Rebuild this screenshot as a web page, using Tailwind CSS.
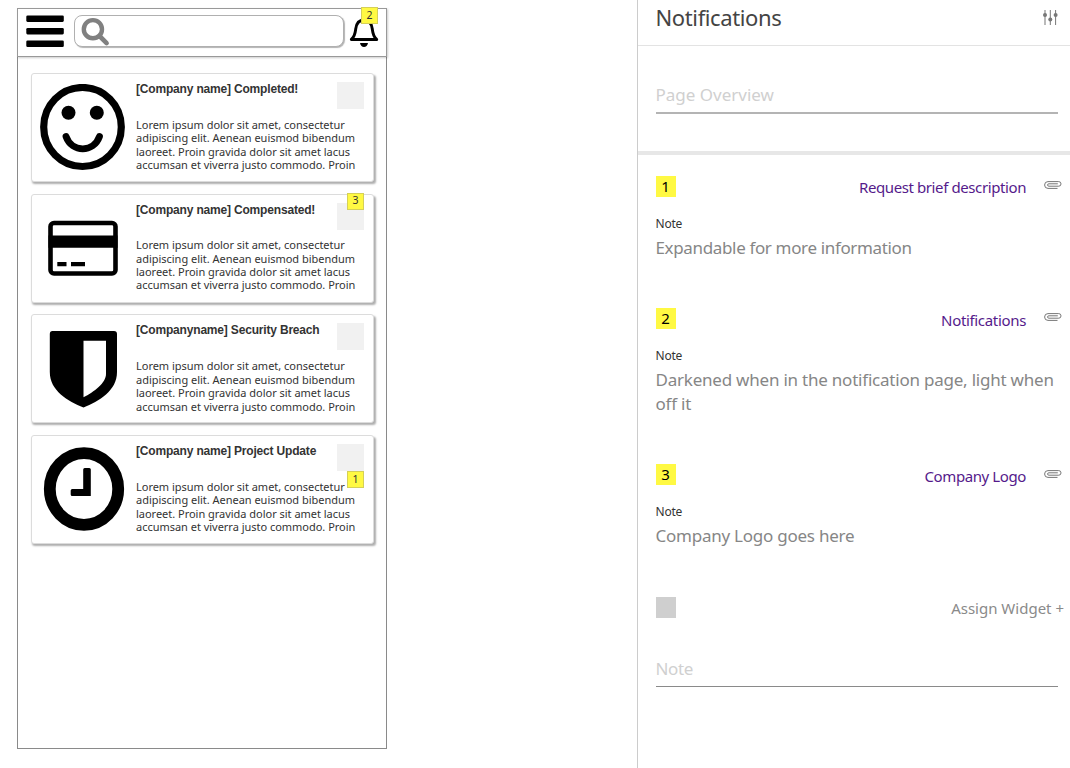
<!DOCTYPE html>
<html lang="en">
<head>
<meta charset="utf-8">
<title>Notifications</title>
<script src="https://cdn.jsdelivr.net/npm/@tailwindcss/browser@4"></script>
</head>
<body class="flex h-[768px] w-[1070px] overflow-hidden bg-white font-['Noto_Sans',sans-serif]">

<!-- Wireframe canvas -->
<main class="w-[637px] shrink-0 pl-[17px] pt-2">
  <div class="h-[741px] w-[370px] border border-[#8a8a8a]">
    <header class="relative -ml-px -mt-px flex h-[49px] w-[370px] border border-[#999] bg-white shadow-[1px_1px_2px_rgba(0,0,0,0.2)]">
      <svg class="ml-2 mt-[6px] h-[33px] w-[39px]" viewBox="0 0 39 33"><rect x=".3" y=".5" width="37.5" height="6.4" rx="1.3"/><rect x=".3" y="13" width="37.5" height="6.4" rx="1.3"/><rect x=".3" y="25.5" width="37.5" height="6.5" rx="1.3"/></svg>
      <div class="ml-[9px] mt-[6px] h-8 w-[270px] rounded-lg border border-[#b0b0b0] bg-white pl-[6px] shadow-[1px_1px_1px_rgba(0,0,0,0.3)]">
        <svg class="mt-px h-[30px] w-[30px]" viewBox="0 0 30 30" fill="none" stroke="#808080"><circle cx="11.9" cy="12.2" r="9.1" stroke-width="4.4"/><path d="M19 19.5l6.600 6.600" stroke-width="4.600" stroke-linecap="round"/></svg>
      </div>
      <svg class="ml-[5px] mt-[7px] h-[32px] w-[30px]" viewBox="0 0 30 32"><path d="M2.3 23.500C6 20.500 6.200 17 6.700 13C7.400 7 9.800 4 15 4s7.600 3 8.300 9c.5 4 .7 7.500 4.400 10.500z" fill="none" stroke="#000" stroke-width="2.900" stroke-linejoin="round"/><path d="M15 1v4" stroke="#000" stroke-width="3"/><path d="M11 27h8c-.5 2.600-2 4-4 4s-3.500-1.400-4-4z"/></svg>
      <span class="absolute left-[343px] top-[-2px] flex h-[17px] w-[17px] items-center justify-center border border-[#d5d058] bg-[#fff943] text-[10.5px] text-[#333]">2</span>
    </header>

    <div class="flex flex-col gap-[11.700px] pl-[13px] pt-4">
      <article class="relative flex h-[109px] w-[343px] rounded-[3px] border border-[#dcdcdc] bg-white shadow-[1.500px_2px_2px_rgba(0,0,0,0.32)]">
        <svg class="ml-2 mt-[10px] h-[87px] w-[86px] shrink-0" viewBox="0 0 86 87"><ellipse cx="42.500" cy="43" rx="38.800" ry="39.500" fill="none" stroke="#000" stroke-width="7.200"/><circle cx="28.500" cy="28.800" r="7"/><circle cx="56.800" cy="28.800" r="7"/><path d="M26 52.500c6 16.500 27.500 16.500 33.500 0" fill="none" stroke="#000" stroke-width="6.800" stroke-linecap="round"/></svg>
        <div class="ml-[10px] mt-[7px] whitespace-nowrap">
          <h2 class="font-['Liberation_Sans',sans-serif] text-xs font-bold leading-4 tracking-[-0.18px] text-[#333]">[Company name] Completed!</h2>
          <p class="mt-[21px] text-[11px] leading-[13.400px] tracking-[-0.02px] text-[#333]">Lorem ipsum dolor sit amet, consectetur<br>adipiscing elit. Aenean euismod bibendum<br>laoreet. Proin gravida dolor sit amet lacus<br>accumsan et viverra justo commodo. Proin</p>
        </div>
        <div class="absolute right-[9px] top-2 h-[27px] w-[27px] bg-[#f1f1f1]"></div>
      </article>

      <article class="relative flex h-[109px] w-[343px] rounded-[3px] border border-[#dcdcdc] bg-white shadow-[1.500px_2px_2px_rgba(0,0,0,0.32)]">
        <svg class="ml-2 mt-[10px] h-[87px] w-[86px] shrink-0" viewBox="0 0 86 87"><rect x="10.500" y="18" width="65" height="50.500" rx="3.500" fill="none" stroke="#000" stroke-width="4.600"/><path d="M8.500 30.500h69v12.300h-69zM17.300 57h9.200v4.300h-9.200zM31 57h14v4.300H31z"/></svg>
        <div class="ml-[10px] mt-[7px] whitespace-nowrap">
          <h2 class="font-['Liberation_Sans',sans-serif] text-xs font-bold leading-4 tracking-[-0.18px] text-[#333]">[Company name] Compensated!</h2>
          <p class="mt-[20.500px] text-[11px] leading-[13.400px] tracking-[-0.02px] text-[#333]">Lorem ipsum dolor sit amet, consectetur<br>adipiscing elit. Aenean euismod bibendum<br>laoreet. Proin gravida dolor sit amet lacus<br>accumsan et viverra justo commodo. Proin</p>
        </div>
        <div class="absolute right-[9px] top-2 h-[27px] w-[27px] bg-[#f1f1f1]"></div>
        <span class="absolute right-[9px] top-[-2px] flex h-[17px] w-[17px] items-center justify-center border border-[#d5d058] bg-[#fff943] text-[10.500px] text-[#333]">3</span>
      </article>

      <article class="relative flex h-[109px] w-[343px] rounded-[3px] border border-[#dcdcdc] bg-white shadow-[1.500px_2px_2px_rgba(0,0,0,0.32)]">
        <svg class="ml-2 mt-[10.500px] h-[87px] w-[86px] shrink-0" viewBox="0 0 86 87"><path fill-rule="evenodd" d="M12.500 5h61.500q3 0 3 3v38c0 19-18 29-33.500 35.500C28 75 9.800 65 9.800 46V8q0-3 2.700-3zM43.500 14.800v56.500C54 66 66 57 66 48V14.800z"/></svg>
        <div class="ml-[10px] mt-[7px] whitespace-nowrap">
          <h2 class="font-['Liberation_Sans',sans-serif] text-xs font-bold leading-4 tracking-[-0.18px] text-[#333]">[Companyname] Security Breach</h2>
          <p class="mt-[21px] text-[11px] leading-[13.400px] tracking-[-0.02px] text-[#333]">Lorem ipsum dolor sit amet, consectetur<br>adipiscing elit. Aenean euismod bibendum<br>laoreet. Proin gravida dolor sit amet lacus<br>accumsan et viverra justo commodo. Proin</p>
        </div>
        <div class="absolute right-[9px] top-2 h-[27px] w-[27px] bg-[#f1f1f1]"></div>
      </article>

      <article class="relative flex h-[109px] w-[343px] rounded-[3px] border border-[#dcdcdc] bg-white shadow-[1.500px_2px_2px_rgba(0,0,0,0.32)]">
        <svg class="ml-2 mt-[10px] h-[87px] w-[86px] shrink-0" viewBox="0 0 86 87"><ellipse cx="44" cy="43" rx="34.200" ry="35.800" fill="none" stroke="#000" stroke-width="11.800"/><path d="M44.700 22h4.600q1.500 0 1.500 1.500V50H32.200q-1.500 0-1.500-1.500V44.500q0-1.500 1.500-1.500h11V23.500q0-1.500 1.500-1.500z"/></svg>
        <div class="ml-[10px] mt-[7px] whitespace-nowrap">
          <h2 class="font-['Liberation_Sans',sans-serif] text-xs font-bold leading-4 tracking-[-0.18px] text-[#333]">[Company name] Project Update</h2>
          <p class="mt-[21px] text-[11px] leading-[13.400px] tracking-[-0.02px] text-[#333]">Lorem ipsum dolor sit amet, consectetur<br>adipiscing elit. Aenean euismod bibendum<br>laoreet. Proin gravida dolor sit amet lacus<br>accumsan et viverra justo commodo. Proin</p>
        </div>
        <div class="absolute right-[9px] top-2 h-[27px] w-[27px] bg-[#f1f1f1]"></div>
        <span class="absolute right-[9px] top-[35px] flex h-[17px] w-[17px] items-center justify-center border border-[#d5d058] bg-[#fff943] text-[10.500px] text-[#333]">1</span>
      </article>
    </div>
  </div>
</main>

<!-- Notes panel -->
<aside class="w-[433px] whitespace-nowrap border-l border-[#ccc]">
  <header class="flex h-[46px] items-start border-b border-[#e3e3e3] pl-[17.500px]">
    <h1 class="mt-[2px] text-[22px] leading-[30px] tracking-[-0.38px] text-[#444]">Notifications</h1>
    <svg class="ml-auto mr-[12px] mt-[9px] h-4 w-[15px]" viewBox="0 0 15 16" fill="#777"><path d="M1.500 1h1v15h-1zM6.800 1h1v15h-1zM12.100 1h1v15h-1z"/><circle cx="2" cy="6" r="2"/><circle cx="7.300" cy="10.500" r="2"/><circle cx="12.600" cy="6" r="2"/></svg>
  </header>
  <section class="h-[109px] border-b-4 border-[#e7e7e7] pl-[17.500px] pt-9">
    <div class="h-8 w-[402px] border-b-2 border-[#b4b4b4] text-[17px] leading-[25px] text-[#d0d0d0]">Page Overview</div>
  </section>

  <section class="h-[132px] pl-[17.500px] pt-[21px]">
    <div class="flex">
      <span class="flex h-[21px] w-5 items-center justify-center bg-[#fff943] text-[15px] text-black">1</span>
      <a class="ml-auto mr-[18px] text-[15px] leading-[23px] tracking-[-0.4px] text-[#551a8b]">Request brief description</a>
      <svg class="mr-2 mt-[5px] h-2 w-[18px]" viewBox="0 0 18 8" fill="none" stroke="#777"><path d="M13.500 7.400H4a3.400 3.400 0 0 1 0-6.800h10.700a2.300 2.300 0 0 1 0 4.600H4.800a1.200 1.200 0 0 1 0-2.400h9"/></svg>
    </div>
    <div class="mt-[17px] text-xs leading-4 tracking-[-0.2px] text-[#333]">Note</div>
    <p class="mt-1 text-[17px] leading-6 tracking-[-0.35px] text-[#868686]">Expandable for more information</p>
  </section>

  <section class="h-[156px] pl-[17.500px] pt-[21px]">
    <div class="flex">
      <span class="flex h-[21px] w-5 items-center justify-center bg-[#fff943] text-[15px] text-black">2</span>
      <a class="ml-auto mr-[18px] pt-px text-[15px] leading-[22px] tracking-[-0.33px] text-[#551a8b]">Notifications</a>
      <svg class="mr-2 mt-[5px] h-2 w-[18px]" viewBox="0 0 18 8" fill="none" stroke="#777"><path d="M13.500 7.400H4a3.400 3.400 0 0 1 0-6.800h10.700a2.300 2.300 0 0 1 0 4.600H4.800a1.200 1.200 0 0 1 0-2.400h9"/></svg>
    </div>
    <div class="mt-[17px] text-xs leading-4 tracking-[-0.2px] text-[#333]">Note</div>
    <p class="mt-1 text-[17px] leading-6 tracking-[-0.22px] text-[#868686]">Darkened when in the notification page, light when<br>off it</p>
  </section>

  <section class="h-[132px] pl-[17.500px] pt-[21px]">
    <div class="flex">
      <span class="flex h-[21px] w-5 items-center justify-center bg-[#fff943] text-[15px] text-black">3</span>
      <a class="ml-auto mr-[18px] pt-px text-[15px] leading-[22px] tracking-[-0.4px] text-[#551a8b]">Company Logo</a>
      <svg class="mr-2 mt-[6px] h-2 w-[18px]" viewBox="0 0 18 8" fill="none" stroke="#777"><path d="M13.500 7.400H4a3.400 3.400 0 0 1 0-6.800h10.700a2.300 2.300 0 0 1 0 4.600H4.800a1.200 1.200 0 0 1 0-2.400h9"/></svg>
    </div>
    <div class="mt-[17px] text-xs leading-4 tracking-[-0.2px] text-[#333]">Note</div>
    <p class="mt-1 text-[17px] leading-6 tracking-[-0.24px] text-[#868686]">Company Logo goes here</p>
  </section>

  <section class="pl-[17.500px] pt-[22px]">
    <div class="flex">
      <span class="h-[21px] w-5 bg-[#cfcfcf]"></span>
      <span class="ml-auto mr-[6px] text-[15px] leading-[22px] text-[#8a8a8a]">Assign Widget +</span>
    </div>
    <div class="mt-[37px] h-[31px] w-[402px] border-b border-[#8a8a8a] text-[17px] leading-[25px] tracking-[-0.4px] text-[#d0d0d0]">Note</div>
  </section>
</aside>
</body>
</html>
